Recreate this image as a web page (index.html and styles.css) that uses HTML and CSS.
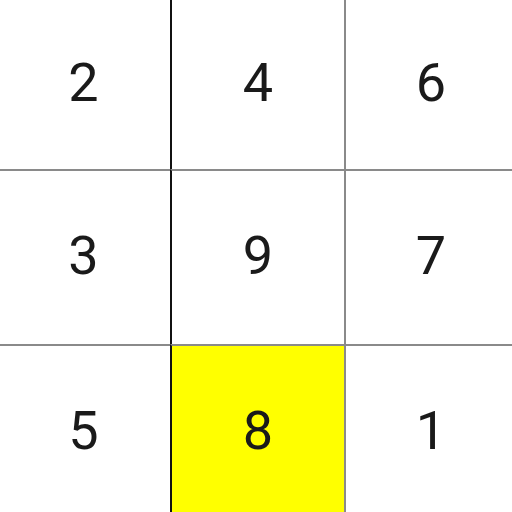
FILE: index.html
```html
<!DOCTYPE html>
<html>
<head>
<meta charset="utf-8">
<link rel="stylesheet" href="styles.css">
</head>
<body>
<div class="board">
  <div class="cell c1 r1">2</div>
  <div class="cell c2 r1">4</div>
  <div class="cell c3 r1">6</div>
  <div class="cell c1 r2">3</div>
  <div class="cell c2 r2">9</div>
  <div class="cell c3 r2">7</div>
  <div class="cell c1 r3">5</div>
  <div class="cell c2 r3 hl">8</div>
  <div class="cell c3 r3">1</div>
</div>
</body>
</html>
```

FILE: styles.css
```css
html, body {
  margin: 0;
  padding: 0;
  background: #ffffff;
  overflow: hidden;
}
.board {
  display: grid;
  grid-template-columns: 170px 174px 174px;
  grid-template-rows: 169px 175px 174px;
  width: 518px;
}
.cell {
  display: flex;
  align-items: center;
  justify-content: center;
  font-family: Roboto, "Noto Sans", sans-serif;
  font-size: 54px;
  color: #1a1a1a;
  box-sizing: border-box;
  padding-bottom: 4px;
}
.c1 { padding-right: 3px; }
.c2 { border-left: 2px solid #111111; }
.c3 { border-left: 2px solid #8a8a8a; padding-right: 2px; }
.r2, .r3 { border-top: 2px solid #8a8a8a; }
.hl { background: #ffff00; }
```
